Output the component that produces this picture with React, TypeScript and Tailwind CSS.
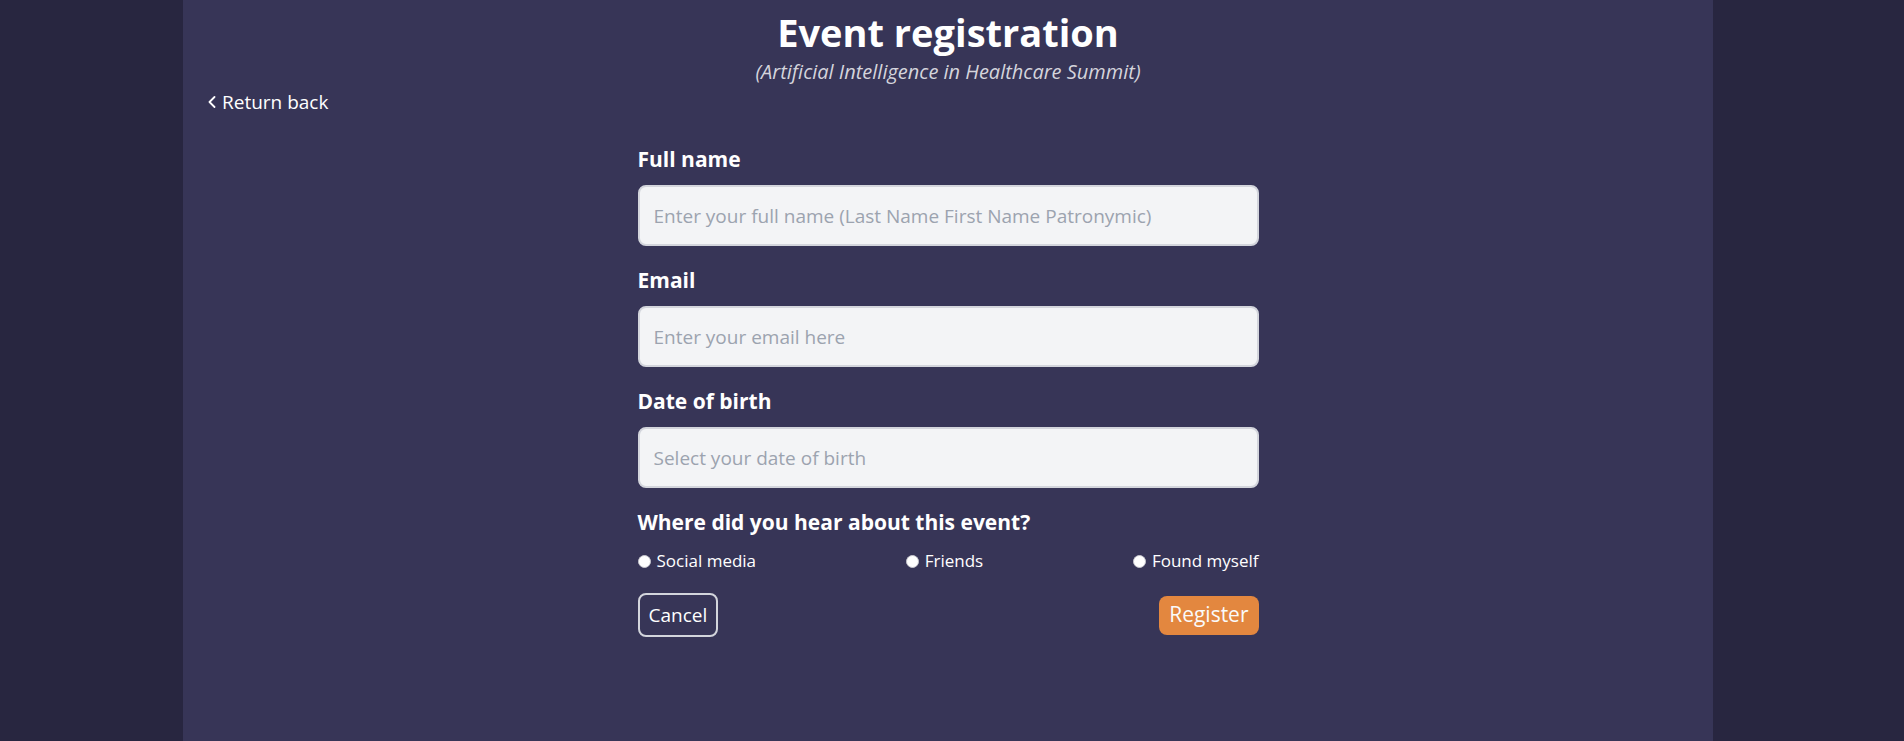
import { useState } from "react";

const fields = [
  { id: "fullName", label: "Full name", placeholder: "Enter your full name (Last Name First Name Patronymic)" },
  { id: "email", label: "Email", placeholder: "Enter your email here" },
  { id: "dob", label: "Date of birth", placeholder: "Select your date of birth" },
];

const sources = ["Social media", "Friends", "Found myself"];

export default function App() {
  const [source, setSource] = useState<string | null>(null);

  return (
    <div className="min-h-screen bg-[#282640] font-['Open_Sans',sans-serif]">
      <div className="ml-[183px] w-[1530px] min-h-screen bg-[#373557] px-[25px] pt-[12px]">
        {/* Heading */}
        <h1 className="text-center text-[38px] leading-[40px] font-bold text-white">Event registration</h1>
        <p className="mt-[7px] text-center text-[20px] leading-[26px] italic text-[#d4d4dc]">
          (Artificial Intelligence in Healthcare Summit)
        </p>

        <a href="#" className="mt-[5px] inline-flex items-center gap-[6px] text-[19px] leading-[24px] text-white">
          <svg width="8" height="12" viewBox="0 0 8 12" fill="none">
            <path d="M6.5 1L1.5 6l5 5" stroke="white" strokeWidth="1.8" strokeLinecap="round" strokeLinejoin="round" />
          </svg>
          Return back
        </a>

        {/* Form */}
        <form className="mx-auto mt-[31px] w-[621px]">
          {fields.map((f) => (
            <div key={f.id} className="mb-5">
              <label htmlFor={f.id} className="block text-[21px] leading-[28px] font-bold text-white mb-3">
                {f.label}
              </label>
              <input
                id={f.id}
                placeholder={f.placeholder}
                className="block w-full h-[61px] rounded-lg border-2 border-[#d3d5dc] bg-[#f3f4f6] px-[14px] text-[19px] text-gray-700 placeholder:text-[#9ca3af] outline-none"
              />
            </div>
          ))}

          <p className="text-[21px] leading-[28px] font-bold text-white">Where did you hear about this event?</p>
          <div className="mt-[13px] flex justify-between">
            {sources.map((s) => (
              <label key={s} className="flex items-center text-[17px] leading-[24px] text-white cursor-pointer">
                <span
                  onClick={() => setSource(s)}
                  className="mr-[6px] flex h-[13px] w-[13px] items-center justify-center rounded-full border border-[#c9c9d0] bg-white"
                >
                  {source === s && <span className="h-[6px] w-[6px] rounded-full bg-[#373557]" />}
                </span>
                {s}
              </label>
            ))}
          </div>

          <div className="mt-5 flex items-center justify-between">
            <button
              type="button"
              className="h-[44px] rounded-lg border-2 border-[#d3d5dc] px-[9px] text-[19px] text-white"
            >
              Cancel
            </button>
            <button
              type="submit"
              className="h-[39px] rounded-lg bg-[#e3873f] px-[10px] text-[21px] text-[#fafafa]"
            >
              Register
            </button>
          </div>
        </form>
      </div>
    </div>
  );
}
